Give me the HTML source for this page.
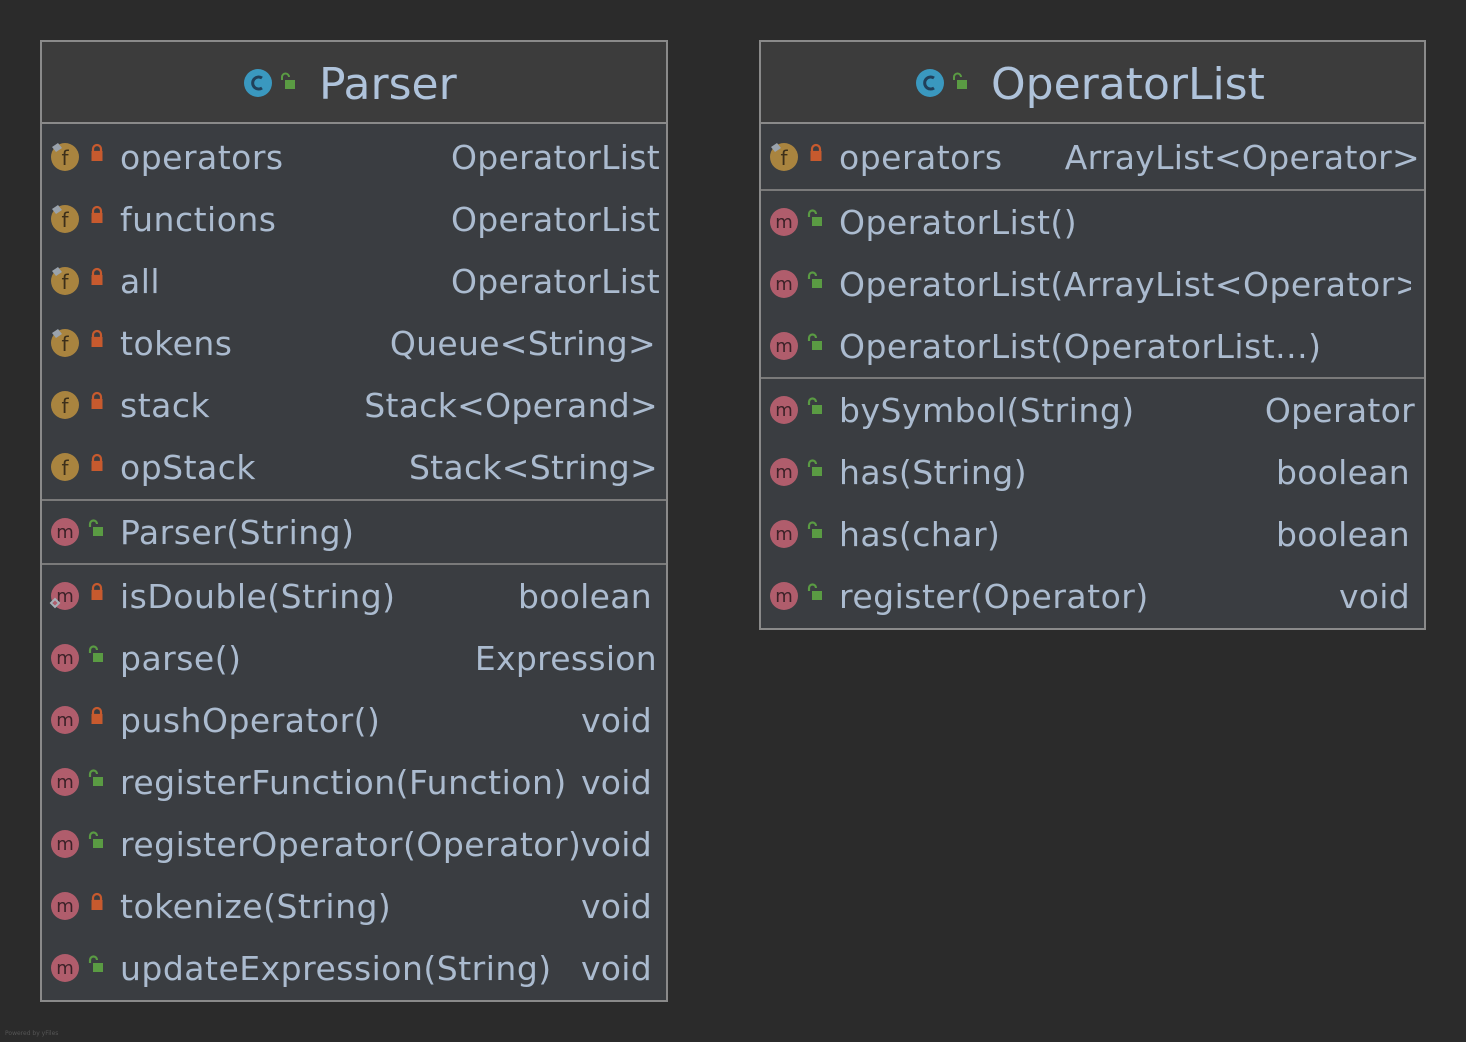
<!DOCTYPE html>
<html><head><meta charset="utf-8"><style>
*{margin:0;padding:0;box-sizing:border-box}
body{width:1466px;height:1042px;background:#2b2b2b;position:relative;overflow:hidden;font-family:"DejaVu Sans","Liberation Sans",sans-serif;color:#abbbcf}
.box{position:absolute;border:2px solid #8a8a8a;background:#3a3d41}
.hdr{position:absolute;left:0;right:0;top:0;height:82px;background:#3c3c3c;border-bottom:2px solid #8a8a8a}
.title{position:absolute;top:17px;font-size:44px;color:#afc3db;white-space:nowrap}
.sep{position:absolute;left:0;right:0;height:2px;background:#7a7a7a}
.r{position:absolute;left:0;right:0;height:62px}
.r svg{position:absolute;left:6px;top:15px}
.n{position:absolute;left:78px;top:12px;font-size:33px;letter-spacing:0.5px;white-space:nowrap;overflow:hidden}
.t{position:absolute;top:12px;font-size:33px;letter-spacing:0.3px;white-space:nowrap}
</style></head><body>
<svg width="0" height="0" style="position:absolute">
<defs>
<symbol id="F" viewBox="0 0 70 30"><circle cx="17" cy="16" r="14" fill="#a9843f"/><text x="17" y="24" font-size="20" text-anchor="middle" fill="#3c2f1a" font-family="DejaVu Sans">f</text><path d="M4 6 L10 2 L14 7 L8 11Z" fill="#9aa3ad"/><path d="M45 8 a4 4 0 0 1 8 0 v3 h-8z" fill="none" stroke="#c75a2e" stroke-width="2.2"/><rect x="43.5" y="10" width="11" height="10" fill="#c75a2e"/></symbol>
<symbol id="Ff" viewBox="0 0 70 30"><circle cx="17" cy="16" r="14" fill="#a9843f"/><text x="17" y="24" font-size="20" text-anchor="middle" fill="#3c2f1a" font-family="DejaVu Sans">f</text><path d="M45 8 a4 4 0 0 1 8 0 v3 h-8z" fill="none" stroke="#c75a2e" stroke-width="2.2"/><rect x="43.5" y="10" width="11" height="10" fill="#c75a2e"/></symbol>
<symbol id="Mpub" viewBox="0 0 70 30"><circle cx="17" cy="16" r="14" fill="#b05d6c"/><text x="17" y="22" font-size="18" text-anchor="middle" fill="#3c2228" font-family="DejaVu Sans">m</text><path d="M42 11 v-3 a3.5 3.5 0 0 1 7 0" fill="none" stroke="#5a9b43" stroke-width="2.2"/><rect x="45" y="11" width="10" height="9" fill="#5a9b43"/></symbol>
<symbol id="Mpriv" viewBox="0 0 70 30"><circle cx="17" cy="16" r="14" fill="#b05d6c"/><text x="17" y="22" font-size="18" text-anchor="middle" fill="#3c2228" font-family="DejaVu Sans">m</text><path d="M45 8 a4 4 0 0 1 8 0 v3 h-8z" fill="none" stroke="#c75a2e" stroke-width="2.2"/><rect x="43.5" y="10" width="11" height="10" fill="#c75a2e"/></symbol>
<symbol id="Mst" viewBox="0 0 70 30"><circle cx="17" cy="16" r="14" fill="#b05d6c"/><text x="17" y="22" font-size="18" text-anchor="middle" fill="#3c2228" font-family="DejaVu Sans">m</text><path d="M7 19 L11 23 L7 27 L3 23Z" fill="none" stroke="#a8b0b8" stroke-width="2"/><path d="M45 8 a4 4 0 0 1 8 0 v3 h-8z" fill="none" stroke="#c75a2e" stroke-width="2.2"/><rect x="43.5" y="10" width="11" height="10" fill="#c75a2e"/></symbol>
</defs></svg>

<div class="box" style="left:40px;top:40px;width:628px;height:962px">
 <div class="hdr">
  <svg style="position:absolute;left:200px;top:25px" width="60" height="32"><circle cx="16" cy="16" r="14" fill="#3a98bf"/><path d="M20 11 a6 6 0 1 0 0 10" fill="none" stroke="#21405a" stroke-width="3"/><path d="M40 13 v-3 a3.5 3.5 0 0 1 7 0" fill="none" stroke="#5a9b43" stroke-width="2"/><rect x="43" y="13" width="10" height="9" fill="#5a9b43"/></svg>
  <div class="title" style="left:277px">Parser</div>
 </div>
 <div class="r" style="top:84px"><svg width="70" height="30"><use href="#F"/></svg><div class="n">operators</div><div class="t" style="right:6px">OperatorList</div></div>
 <div class="r" style="top:146px"><svg width="70" height="30"><use href="#F"/></svg><div class="n">functions</div><div class="t" style="right:6px">OperatorList</div></div>
 <div class="r" style="top:208px"><svg width="70" height="30"><use href="#F"/></svg><div class="n">all</div><div class="t" style="right:6px">OperatorList</div></div>
 <div class="r" style="top:270px"><svg width="70" height="30"><use href="#F"/></svg><div class="n">tokens</div><div class="t" style="right:10px">Queue&lt;String&gt;</div></div>
 <div class="r" style="top:332px"><svg width="70" height="30"><use href="#Ff"/></svg><div class="n">stack</div><div class="t" style="right:8px">Stack&lt;Operand&gt;</div></div>
 <div class="r" style="top:394px"><svg width="70" height="30"><use href="#Ff"/></svg><div class="n">opStack</div><div class="t" style="right:8px">Stack&lt;String&gt;</div></div>
 <div class="sep" style="top:457px"></div>
 <div class="r" style="top:459px"><svg width="70" height="30"><use href="#Mpub"/></svg><div class="n">Parser(String)</div></div>
 <div class="sep" style="top:521px"></div>
 <div class="r" style="top:523px"><svg width="70" height="30"><use href="#Mst"/></svg><div class="n">isDouble(String)</div><div class="t" style="right:14px">boolean</div></div>
 <div class="r" style="top:585px"><svg width="70" height="30"><use href="#Mpub"/></svg><div class="n">parse()</div><div class="t" style="right:9px">Expression</div></div>
 <div class="r" style="top:647px"><svg width="70" height="30"><use href="#Mpriv"/></svg><div class="n">pushOperator()</div><div class="t" style="right:14px">void</div></div>
 <div class="r" style="top:709px"><svg width="70" height="30"><use href="#Mpub"/></svg><div class="n">registerFunction(Function)</div><div class="t" style="right:14px">void</div></div>
 <div class="r" style="top:771px"><svg width="70" height="30"><use href="#Mpub"/></svg><div class="n" style="width:462px">registerOperator(Operator)</div><div class="t" style="right:14px">void</div></div>
 <div class="r" style="top:833px"><svg width="70" height="30"><use href="#Mpriv"/></svg><div class="n">tokenize(String)</div><div class="t" style="right:14px">void</div></div>
 <div class="r" style="top:895px"><svg width="70" height="30"><use href="#Mpub"/></svg><div class="n">updateExpression(String)</div><div class="t" style="right:14px">void</div></div>
</div>

<div class="box" style="left:759px;top:40px;width:667px;height:590px">
 <div class="hdr">
  <svg style="position:absolute;left:153px;top:25px" width="60" height="32"><circle cx="16" cy="16" r="14" fill="#3a98bf"/><path d="M20 11 a6 6 0 1 0 0 10" fill="none" stroke="#21405a" stroke-width="3"/><path d="M40 13 v-3 a3.5 3.5 0 0 1 7 0" fill="none" stroke="#5a9b43" stroke-width="2"/><rect x="43" y="13" width="10" height="9" fill="#5a9b43"/></svg>
  <div class="title" style="left:230px">OperatorList</div>
 </div>
 <div class="r" style="top:84px"><svg width="70" height="30"><use href="#F"/></svg><div class="n">operators</div><div class="t" style="right:4px">ArrayList&lt;Operator&gt;</div></div>
 <div class="sep" style="top:147px"></div>
 <div class="r" style="top:149px"><svg width="70" height="30"><use href="#Mpub"/></svg><div class="n">OperatorList()</div></div>
 <div class="r" style="top:211px"><svg width="70" height="30"><use href="#Mpub"/></svg><div class="n" style="width:572px">OperatorList(ArrayList&lt;Operator&gt;)</div></div>
 <div class="r" style="top:273px"><svg width="70" height="30"><use href="#Mpub"/></svg><div class="n">OperatorList(OperatorList...)</div></div>
 <div class="sep" style="top:335px"></div>
 <div class="r" style="top:337px"><svg width="70" height="30"><use href="#Mpub"/></svg><div class="n">bySymbol(String)</div><div class="t" style="right:9px">Operator</div></div>
 <div class="r" style="top:399px"><svg width="70" height="30"><use href="#Mpub"/></svg><div class="n">has(String)</div><div class="t" style="right:14px">boolean</div></div>
 <div class="r" style="top:461px"><svg width="70" height="30"><use href="#Mpub"/></svg><div class="n">has(char)</div><div class="t" style="right:14px">boolean</div></div>
 <div class="r" style="top:523px"><svg width="70" height="30"><use href="#Mpub"/></svg><div class="n">register(Operator)</div><div class="t" style="right:14px">void</div></div>
</div>
<div style="position:absolute;left:5px;top:1030px;font-size:6px;color:#555">Powered by yFiles</div>
</body></html>
